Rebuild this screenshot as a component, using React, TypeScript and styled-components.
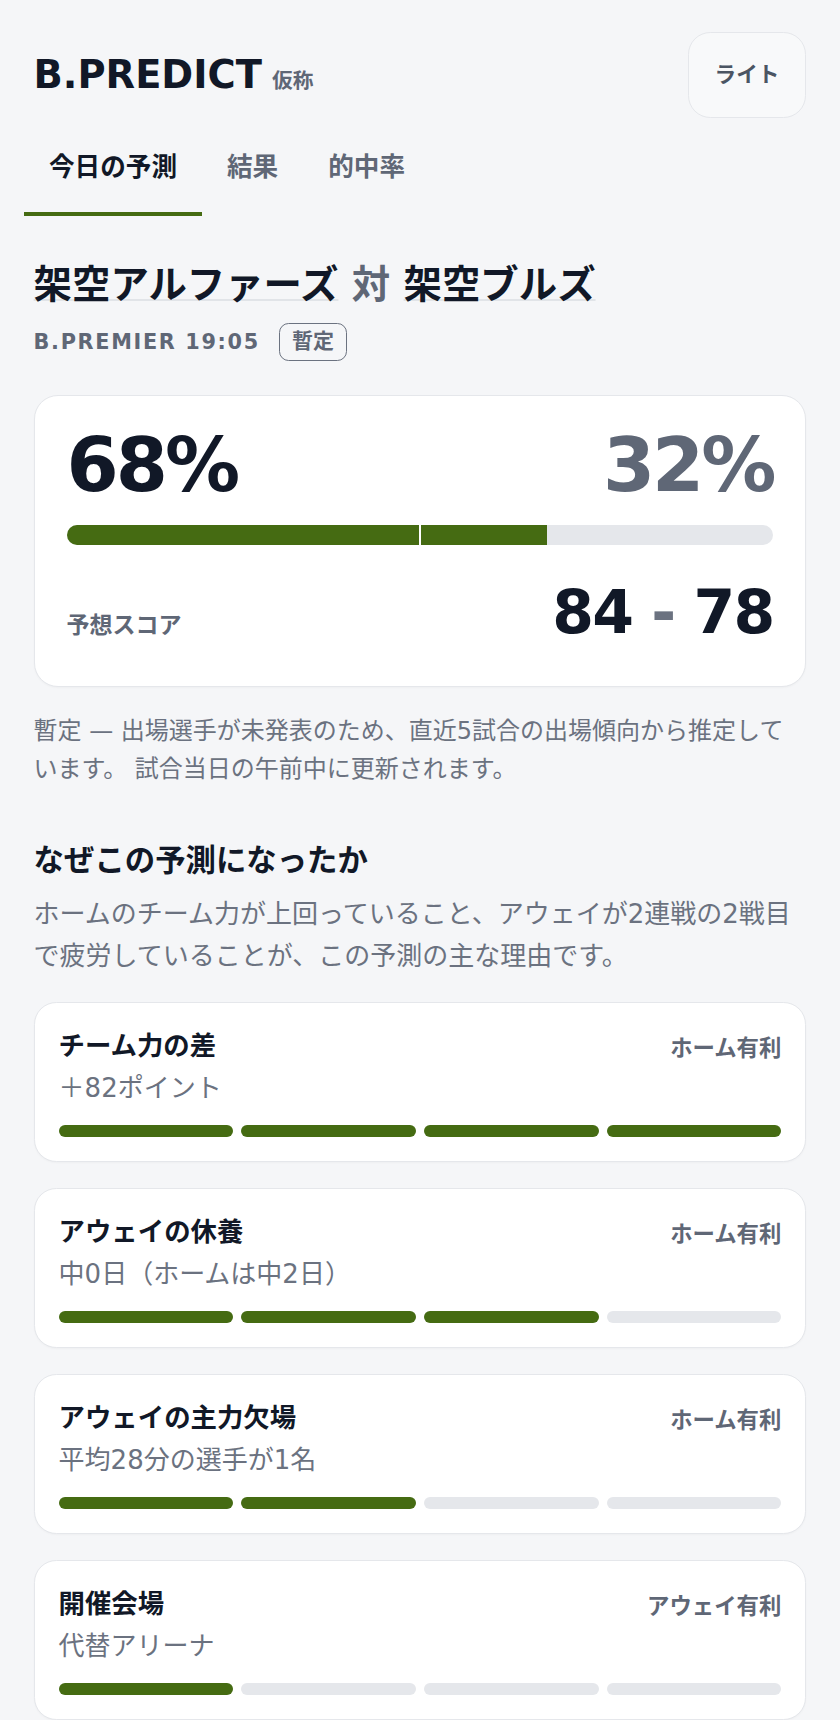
import React from "react";
import styled, { createGlobalStyle } from "styled-components";

const FONT = `"DejaVu Sans", "Noto Sans CJK JP", sans-serif`;
const GREEN = "#456b12";
const TRACK = "#e5e7eb";
const INK = "#111827";
const MUTED = "#5f6776";
const SOFT = "#6b7280";

const GlobalStyle = createGlobalStyle`
  html, body { margin: 0; padding: 0; background: #f5f6f8; }
  body { font-family: ${FONT}; color: ${INK}; }
  * { box-sizing: border-box; }
`;

const Page = styled.div`
  padding: 32px 33.6px 40px;
  min-height: 1720px;
`;

const Header = styled.header`
  display: flex;
  justify-content: space-between;
  align-items: center;
  height: 86px;
`;

const Brand = styled.div`
  display: flex;
  align-items: baseline;
  gap: 10px;
`;

const Logo = styled.span`
  font-size: 38.4px;
  font-weight: 700;
  line-height: 1.2;
  color: ${INK};
`;

const Tag = styled.span`
  font-size: 20.8px;
  font-weight: 700;
  color: ${MUTED};
`;

const ThemeButton = styled.button`
  height: 86px;
  padding: 0 26px;
  border: 1.6px solid #e5e7eb;
  border-radius: 22.4px;
  background: #f8f9fa;
  font: 700 21.6px/1.5 ${FONT};
  color: #4b5563;
`;

const Tabs = styled.nav`
  display: flex;
  margin: 4px -9.6px 0;
`;

const Tab = styled.button<{ $active?: boolean }>`
  padding: 25.6px 25px;
  border: 0;
  border-bottom: 4px solid ${(p) => (p.$active ? GREEN : "transparent")};
  background: none;
  font: 700 25.6px/1.5 ${FONT};
  color: ${(p) => (p.$active ? INK : MUTED)};
`;

const MatchTitle = styled.h1`
  margin: 44px 0 0;
  font-size: 38.4px;
  font-weight: 700;
  line-height: 1.3;
  color: ${INK};
`;

const TeamName = styled.span`
  text-decoration: underline;
  text-decoration-color: #e1e4e8;
  text-decoration-thickness: 1.6px;
`;

const Versus = styled.span`
  color: ${MUTED};
`;

const MetaRow = styled.div`
  display: flex;
  align-items: center;
  gap: 19.2px;
  margin-top: 13px;
`;

const MetaText = styled.span`
  font-size: 20.8px;
  font-weight: 700;
  letter-spacing: 0.08em;
  color: ${MUTED};
`;

const Badge = styled.span`
  display: inline-block;
  padding: 2.6px 12px;
  border: 1.6px solid ${SOFT};
  border-radius: 9.6px;
  font-size: 21px;
  font-weight: 700;
  line-height: 1.5;
  color: ${MUTED};
`;

const ProbCard = styled.section`
  margin-top: 34px;
  padding: 32px;
  background: #fff;
  border: 1.6px solid #e5e7eb;
  border-radius: 24px;
  box-shadow: 0 1px 2px rgba(17, 24, 39, 0.03);
`;

const PercentRow = styled.div`
  display: flex;
  justify-content: space-between;
  align-items: baseline;
`;

const Percent = styled.span<{ $muted?: boolean }>`
  font-size: 75px;
  font-weight: 700;
  line-height: 1;
  letter-spacing: -0.04em;
  color: ${(p) => (p.$muted ? MUTED : INK)};
`;

const ProbTrack = styled.div`
  position: relative;
  margin-top: 21.5px;
  height: 20px;
  border-radius: 10px;
  background: ${TRACK};
  overflow: hidden;
`;

const ProbFill = styled.div`
  height: 100%;
  background: ${GREEN};
`;

const CenterMark = styled.span`
  position: absolute;
  top: 0;
  bottom: 0;
  left: 50%;
  width: 2px;
  margin-left: -1px;
  background: #fff;
`;

const ScoreRow = styled.div`
  display: flex;
  justify-content: space-between;
  align-items: baseline;
  margin-top: 31px;
  padding-bottom: 6px;
`;

const ScoreLabel = styled.span`
  font-size: 23px;
  font-weight: 700;
  color: ${MUTED};
`;

const Score = styled.span`
  font-size: 60px;
  font-weight: 700;
  line-height: 1.2;
  letter-spacing: -0.03em;
  color: ${INK};
`;

const ScoreDash = styled.span`
  color: ${SOFT};
`;

const Note = styled.p`
  margin: 25px 0 0;
  font-size: 24px;
  line-height: 1.6;
  color: ${SOFT};
`;

const SectionTitle = styled.h2`
  margin: 52px 0 0;
  font-size: 30.4px;
  font-weight: 700;
  line-height: 1.4;
  color: ${INK};
`;

const SectionText = styled.p`
  margin: 11px 0 0;
  font-size: 26px;
  line-height: 1.6;
  color: ${SOFT};
`;

const FactorList = styled.div`
  display: flex;
  flex-direction: column;
  gap: 26px;
  margin-top: 25px;
`;

const FactorCard = styled.article`
  padding: 24px;
  background: #fff;
  border: 1.6px solid #e5e7eb;
  border-radius: 22.4px;
  box-shadow: 0 1px 2px rgba(17, 24, 39, 0.03);
`;

const FactorHead = styled.div`
  display: flex;
  justify-content: space-between;
  align-items: center;
`;

const FactorName = styled.h3`
  margin: 0;
  font-size: 26.4px;
  font-weight: 700;
  line-height: 38.4px;
  color: ${INK};
`;

const FactorSide = styled.span`
  font-size: 22.4px;
  font-weight: 700;
  color: ${MUTED};
`;

const FactorValue = styled.div`
  margin-top: 2px;
  font-size: 26px;
  line-height: 1.6;
  color: ${SOFT};
`;

const Segments = styled.div`
  display: grid;
  grid-template-columns: repeat(4, 1fr);
  gap: 8px;
  margin-top: 16px;
`;

const Segment = styled.span<{ $on: boolean }>`
  height: 12px;
  border-radius: 6px;
  background: ${(p) => (p.$on ? GREEN : TRACK)};
`;

const factors = [
  { name: "チーム力の差", side: "ホーム有利", value: "＋82ポイント", level: 4 },
  { name: "アウェイの休養", side: "ホーム有利", value: "中0日（ホームは中2日）", level: 3 },
  { name: "アウェイの主力欠場", side: "ホーム有利", value: "平均28分の選手が1名", level: 2 },
  { name: "開催会場", side: "アウェイ有利", value: "代替アリーナ", level: 1 },
];

export default function App() {
  const homeProb = 68;
  return (
    <>
      <GlobalStyle />
      <Page>
        <Header>
          <Brand>
            <Logo>B.PREDICT</Logo>
            <Tag>仮称</Tag>
          </Brand>
          <ThemeButton>ライト</ThemeButton>
        </Header>

        <Tabs>
          <Tab $active>今日の予測</Tab>
          <Tab>結果</Tab>
          <Tab>的中率</Tab>
        </Tabs>

        <MatchTitle>
          <TeamName>架空アルファーズ</TeamName> <Versus>対</Versus>{" "}
          <TeamName>架空ブルズ</TeamName>
        </MatchTitle>

        <MetaRow>
          <MetaText>B.PREMIER 19:05</MetaText>
          <Badge>暫定</Badge>
        </MetaRow>

        <ProbCard>
          <PercentRow>
            <Percent>{homeProb}%</Percent>
            <Percent $muted>{100 - homeProb}%</Percent>
          </PercentRow>
          <ProbTrack>
            <ProbFill style={{ width: `${homeProb}%` }} />
            <CenterMark />
          </ProbTrack>
          <ScoreRow>
            <ScoreLabel>予想スコア</ScoreLabel>
            <Score>
              84 <ScoreDash>-</ScoreDash> 78
            </Score>
          </ScoreRow>
        </ProbCard>

        <Note>
          暫定 — 出場選手が未発表のため、直近5試合の出場傾向から推定しています。 試合当日の午前中に更新されます。
        </Note>

        <SectionTitle>なぜこの予測になったか</SectionTitle>
        <SectionText>
          ホームのチーム力が上回っていること、アウェイが2連戦の2戦目で疲労していることが、この予測の主な理由です。
        </SectionText>

        <FactorList>
          {factors.map((f) => (
            <FactorCard key={f.name}>
              <FactorHead>
                <FactorName>{f.name}</FactorName>
                <FactorSide>{f.side}</FactorSide>
              </FactorHead>
              <FactorValue>{f.value}</FactorValue>
              <Segments>
                {[0, 1, 2, 3].map((i) => (
                  <Segment key={i} $on={i < f.level} />
                ))}
              </Segments>
            </FactorCard>
          ))}
        </FactorList>
      </Page>
    </>
  );
}
